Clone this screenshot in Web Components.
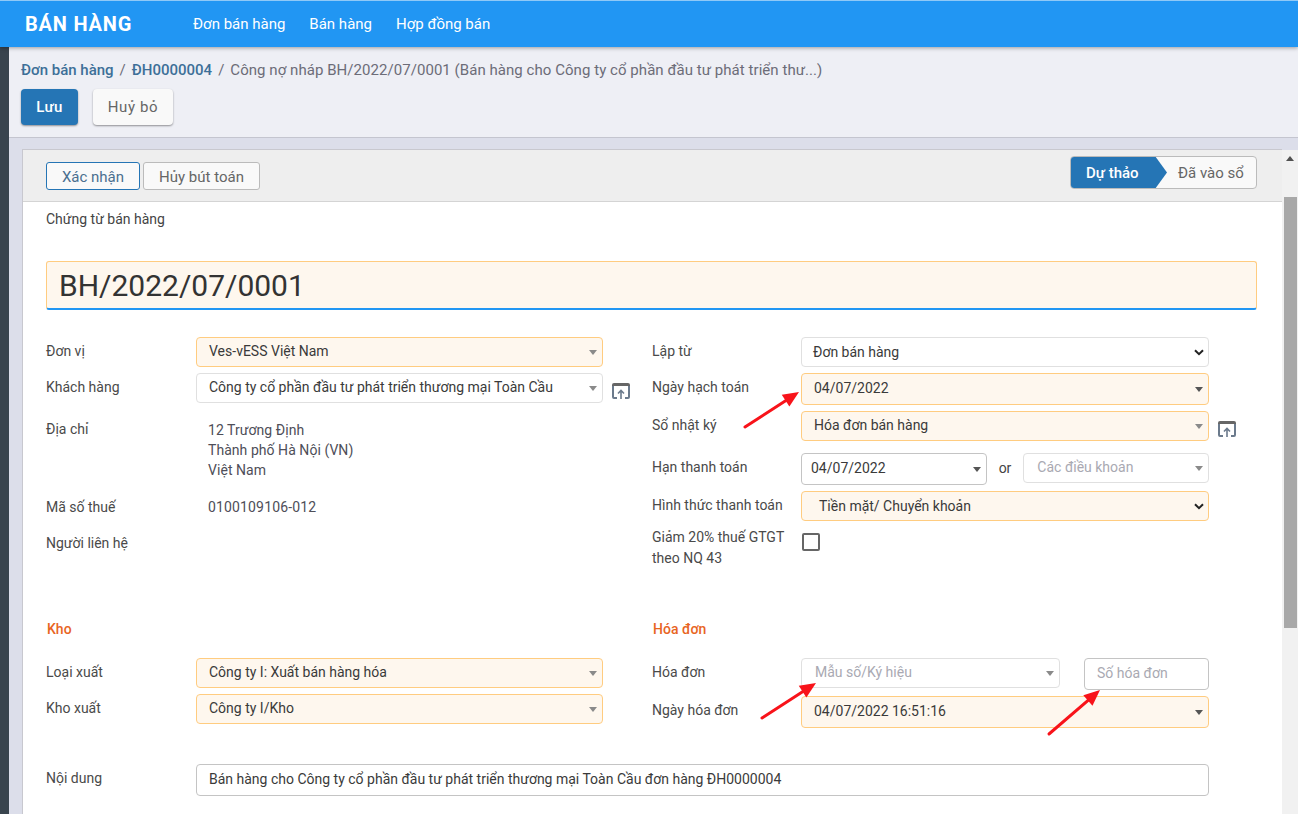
<!DOCTYPE html>
<html lang="vi">
<head>
<meta charset="utf-8">
<title>Bán hàng</title>
<style>
  html, body { margin: 0; height: 100%; overflow: hidden; }
  body { font-family: Roboto, "Liberation Sans", sans-serif; font-size: 14px; color: #444; }
</style>
</head>
<body>
<erp-shell>
  <erp-navbar slot="nav"></erp-navbar>
  <erp-control></erp-control>
  <erp-view>
    <erp-sheet>
      <form-group>
        <form-col>
          <form-row label="Đơn vị"><form-field tone="req" caret="tri"  >Ves-vESS Việt Nam</form-field></form-row>
          <form-row label="Khách hàng" top="6"><form-field caret="tri">Công ty cổ phần đầu tư phát triển thương mại Toàn Cầu</form-field><open-icon slot="extra"></open-icon></form-row>
          <form-row label="Địa chỉ" top="16" nudge="0"><plain-value style="margin-top:1px">12 Trương Định<br>Thành phố Hà Nội (VN)<br>Việt Nam</plain-value></form-row>
          <form-row label="Mã số thuế" top="17" nudge="0"><plain-value style="letter-spacing:.15px">0100109106-012</plain-value></form-row>
          <form-row label="Người liên hệ" top="16" nudge="0"></form-row>
        </form-col>
        <form-col>
          <form-row label="Lập từ" lw="149"><form-field caret="chev" pad="11">Đơn bán hàng</form-field></form-row>
          <form-row label="Ngày hạch toán" lw="149" top="6"><form-field tone="req" caret="dark" h="32">04/07/2022</form-field></form-row>
          <form-row label="Sổ nhật ký" lw="149" top="6"><form-field tone="req" caret="tri">Hóa đơn bán hàng</form-field><open-icon slot="extra"></open-icon></form-row>
          <form-row label="Hạn thanh toán" lw="149" top="12">
            <split-fields>
              <form-field tone="dim" caret="dark" h="32" pad="9" style="width:186px">04/07/2022</form-field>
              <span>or</span>
              <form-field caret="tri" muted pad="13" style="width:186px">Các điều khoản</form-field>
            </split-fields>
          </form-row>
          <form-row label="Hình thức thanh toán" lw="149" top="6"><form-field tone="req" caret="chev" pad="17">Tiền mặt/ Chuyển khoản</form-field></form-row>
          <form-row label="Giảm 20% thuế GTGT theo NQ 43" lw="149" top="6" nudge="0" wide="21"><check-box></check-box></form-row>
        </form-col>
      </form-group>
      <form-group style="margin-top:50px">
        <form-col>
          <group-title>Kho</group-title>
          <form-row label="Loại xuất"><form-field tone="req" caret="tri">Công ty I: Xuất bán hàng hóa</form-field></form-row>
          <form-row label="Kho xuất" top="6"><form-field tone="req" caret="tri">Công ty I/Kho</form-field></form-row>
        </form-col>
        <form-col>
          <group-title>Hóa đơn</group-title>
          <form-row label="Hóa đơn" lw="149">
            <split-fields style="gap:24px">
              <form-field caret="tri" muted pad="13" style="width:259px">Mẫu số/Ký hiệu</form-field>
              <form-field tone="dim" muted h="32" pad="12" style="width:125px">Số hóa đơn</form-field>
            </split-fields>
          </form-row>
          <form-row label="Ngày hóa đơn" lw="149" top="6"><form-field tone="req" caret="dark" h="32">04/07/2022 16:51:16</form-field></form-row>
        </form-col>
      </form-group>
      <form-row label="Nội dung" lw="150" fw="1013" top="36"><form-field tone="dim" h="32" pad="12">Bán hàng cho Công ty cổ phần đầu tư phát triển thương mại Toàn Cầu đơn hàng ĐH0000004</form-field></form-row>
    </erp-sheet>
  </erp-view>
  <red-arrows slot="overlay"></red-arrows>
</erp-shell>

<script>
// page frame: navbar on top, dark strip on the left, the rest in a column
class ErpShell extends HTMLElement {
  constructor() {
    super();
    this.attachShadow({ mode: 'open' }).innerHTML = `
      <style>
        :host { display: grid; grid-template-rows: 47px 1fr; height: 814px; position: relative; overflow: hidden; }
        .body { display: flex; min-height: 0; }
        .strip { width: 9px; flex: none; background: #39444e; }
        .main { flex: 1; min-width: 0; display: flex; flex-direction: column; background: #dcdeea; }
      </style>
      <slot name="nav"></slot>
      <div class="body">
        <div class="strip"></div>
        <div class="main"><slot></slot></div>
      </div>
      <slot name="overlay"></slot>`;
  }
}

class ErpNavbar extends HTMLElement {
  constructor() {
    super();
    this.attachShadow({ mode: 'open' }).innerHTML = `
      <style>
        :host { display: flex; align-items: center; height: 47px; box-sizing: border-box; border-top: 1px solid #8fc9f7;
                background: #2196f3; color: #fff; position: relative; z-index: 2; box-shadow: 0 1px 4px rgba(0,0,0,.35); }
        .brand { font-size: 20px; font-weight: 700; letter-spacing: .8px; margin-left: 25px; width: 168px; }
        a { font-size: 15px; margin-right: 24px; }
      </style>
      <div class="brand">BÁN HÀNG</div>
      <a>Đơn bán hàng</a><a>Bán hàng</a><a>Hợp đồng bán</a>`;
  }
}

class ErpControl extends HTMLElement {
  constructor() {
    super();
    this.attachShadow({ mode: 'open' }).innerHTML = `
      <style>
        :host { display: block; height: 91px; box-sizing: border-box; flex: none; background: #eeeff5;
                border-bottom: 1px solid #c4c5cf; padding: 13px 0 0 12px; }
        .crumbs { line-height: 20px; color: #6c6c78; font-size: 15px; white-space: nowrap; }
        .crumbs b { font-weight: 500; color: #3d6f98; }
        .crumbs i { font-style: normal; margin: 0 6px; }
        .crumbs span { letter-spacing: .05px; }
        .btns { display: flex; gap: 15px; margin-top: 9px; }
        button { height: 36px; border: 0; border-radius: 4px; font: inherit; font-size: 15px; padding: 0; }
        .save { width: 57px; background: #2575b5; color: #fff; font-weight: 500; letter-spacing: .3px; box-shadow: 0 1px 2px rgba(0,0,0,.4); }
        .cancel { width: 80px; background: #f9f9f9; color: #666; letter-spacing: .6px; box-shadow: 0 1px 2px rgba(0,0,0,.4); }
      </style>
      <div class="crumbs"><b>Đơn bán hàng</b><i>/</i><b>ĐH0000004</b><i>/</i><span>Công nợ nháp BH/2022/07/0001 (Bán hàng cho Công ty cổ phần đầu tư phát triển thư...)</span></div>
      <div class="btns"><button class="save">Lưu</button><button class="cancel">Huỷ bỏ</button></div>`;
  }
}

// scroll area, the scrollbar is drawn so it has the reference's look
class ErpView extends HTMLElement {
  constructor() {
    super();
    this.attachShadow({ mode: 'open' }).innerHTML = `
      <style>
        :host { display: flex; flex: 1; min-height: 0; padding: 11px 0 0 13px; overflow: hidden; }
        .content { flex: 1; min-width: 0; }
        .bar { width: 16px; flex: none; margin-top: 1px; background: #f1f1f1; position: relative; display: flex; flex-direction: column; align-items: center; }
        .up { width: 0; height: 0; margin-top: 6px; border: 4px solid transparent; border-top: 0; border-bottom: 5px solid #505050; }
        .thumb { width: 13px; height: 431px; margin-top: 36px; background: #a8a8a8; }
      </style>
      <div class="content"><slot></slot></div>
      <div class="bar"><div class="up"></div><div class="thumb"></div></div>`;
  }
}

class ErpSheet extends HTMLElement {
  constructor() {
    super();
    this.attachShadow({ mode: 'open' }).innerHTML = `
      <style>
        :host { display: block; background: #fff; border: 1px solid #c8c8cf; border-width: 1px 0 0 1px; height: 800px; }
        .bar { height: 52px; box-sizing: border-box; background: #eee; border-bottom: 1px solid #d4d4d4;
               display: flex; justify-content: space-between; padding: 6px 25px 0 23px; }
        .actions { display: flex; gap: 3px; padding-top: 6px; }
        button { height: 28px; box-sizing: border-box; border: 1px solid #bbb; border-radius: 3px; background: #f9f9f9;
                 font: inherit; font-size: 15px; color: #666; padding: 1px 0 0; }
        .primary { width: 94px; border-color: #2575b5; color: #4a6f8f; }
        .second { width: 117px; }
        .status { width: 187px; height: 33px; box-sizing: border-box; border: 1px solid #bbb; border-radius: 4px; background: #f9f9f9;
                  display: flex; position: relative; overflow: hidden; color: #666; font-size: 15px; }
        .on { position: absolute; left: -1px; top: -1px; bottom: -1px; width: 97px; background: #2575b5; color: #fff; font-weight: 500;
              clip-path: polygon(0 0, 85px 0, 97px 50%, 85px 100%, 0 100%); line-height: 35px; padding-left: 16px; box-sizing: border-box; }
        .off { position: absolute; left: 107px; line-height: 33px; white-space: nowrap; }
        .body { padding: 7px 0 0 23px; }
        .kind { line-height: 20px; color: #444; }
        .title { width: 1211px; height: 49px; box-sizing: border-box; margin-top: 32px; padding-left: 12px; background: #fef7ee; color: #333;
                 border: 1px solid #ffcc80; border-bottom: 2px solid #2196f3; border-radius: 3px; font-size: 30px; line-height: 47px; }
        .groups { margin-top: 27px; }
      </style>
      <div class="bar">
        <div class="actions"><button class="primary">Xác nhận</button><button class="second">Hủy bút toán</button></div>
        <div class="status"><div class="on">Dự thảo</div><div class="off">Đã vào sổ</div></div>
      </div>
      <div class="body">
        <div class="kind">Chứng từ bán hàng</div>
        <div class="title">BH/2022/07/0001</div>
        <div class="groups"><slot></slot></div>
      </div>`;
  }
}

class FormGroup extends HTMLElement {
  constructor() {
    super();
    this.attachShadow({ mode: 'open' }).innerHTML = `
      <style>:host { display: grid; grid-template-columns: 606px 557px; }</style><slot></slot>`;
  }
}

class FormCol extends HTMLElement {
  constructor() {
    super();
    this.attachShadow({ mode: 'open' }).innerHTML = `
      <style>:host { display: block; }</style><slot></slot>`;
  }
}

class GroupTitle extends HTMLElement {
  constructor() {
    super();
    this.attachShadow({ mode: 'open' }).innerHTML = `
      <style>:host { display: block; line-height: 20px; margin-bottom: 19px; color: #e8651f; font-weight: 500; padding-left: 1px; }</style><slot></slot>`;
  }
}

class FormRow extends HTMLElement {
  connectedCallback() {
    if (this.shadowRoot) return;
    const top = this.getAttribute('top') || 0;
    const lw = this.getAttribute('lw') || 150;
    const fw = this.getAttribute('fw') || (557 - lw);
    const nudge = this.getAttribute('nudge') || 4;
    const lh = this.getAttribute('wide') || 20;
    this.attachShadow({ mode: 'open' }).innerHTML = `
      <style>
        :host { display: grid; grid-template-columns: ${lw}px ${fw}px auto; margin-top: ${top}px; }
        .label { line-height: ${lh}px; padding-top: ${nudge}px; padding-right: 12px; color: #4a4a4a; }
        .extra { margin-left: 9px; }
      </style>
      <div class="label">${this.getAttribute('label')}</div>
      <div><slot></slot></div>
      <div class="extra"><slot name="extra"></slot></div>`;
  }
}

// looks like an odoo many2one / selection input
class FormField extends HTMLElement {
  connectedCallback() {
    if (this.shadowRoot) return;
    const h = this.getAttribute('h') || 30;
    const pad = this.getAttribute('pad') || 12;
    const tone = this.getAttribute('tone');
    const caret = this.getAttribute('caret');
    const bg = tone === 'req' ? '#fef7ee' : '#fff';
    const border = tone === 'req' ? '#ffcc80' : tone === 'dim' ? '#c4c4c4' : '#e0e0e0';
    const color = this.hasAttribute('muted') ? '#a9a9b2' : '#3a3a3a';
    // native selects sit one pixel lower than the text inputs
    const lift = caret === 'chev' ? 0 : 2;
    let mark = '';
    if (caret === 'chev') {
      mark = '<svg width="10" height="7" viewBox="0 0 10 7"><path d="M1 1.2 5 5.2 9 1.2" fill="none" stroke="#222" stroke-width="2"/></svg>';
    } else if (caret === 'tri') {
      mark = '<svg width="10" height="5" viewBox="0 0 10 5"><path d="M1 0H9L5 5Z" fill="#8a8a8a"/></svg>';
    } else if (caret === 'dark') {
      mark = '<svg width="10" height="5" viewBox="0 0 10 5"><path d="M1 0H9L5 5Z" fill="#555"/></svg>';
    }
    this.attachShadow({ mode: 'open' }).innerHTML = `
      <style>
        :host { display: flex; align-items: center; height: ${h}px; box-sizing: border-box; background: ${bg}; color: ${color};
                border: 1px solid ${border}; border-radius: 4px; padding: 0 4px 0 ${pad}px; white-space: nowrap; }
        .text { flex: 1; padding-bottom: ${lift}px; }
        svg { display: block; }
      </style>
      <div class="text"><slot></slot></div>${mark}`;
  }
}

class SplitFields extends HTMLElement {
  constructor() {
    super();
    this.attachShadow({ mode: 'open' }).innerHTML = `
      <style>:host { display: flex; gap: 12px; align-items: flex-start; line-height: 30px; }</style><slot></slot>`;
  }
}

class PlainValue extends HTMLElement {
  constructor() {
    super();
    this.attachShadow({ mode: 'open' }).innerHTML = `
      <style>:host { display: block; line-height: 20px; padding-left: 12px; color: #4e4e58; letter-spacing: .05px; }</style><slot></slot>`;
  }
}

class CheckBox extends HTMLElement {
  constructor() {
    super();
    this.attachShadow({ mode: 'open' }).innerHTML = `
      <style>:host { display: block; width: 18px; height: 18px; box-sizing: border-box; margin: 6px 0 0 1px; border: 2px solid #666; border-radius: 2px; background: #fff; }</style>`;
  }
}

class OpenIcon extends HTMLElement {
  constructor() {
    super();
    this.attachShadow({ mode: 'open' }).innerHTML = `
      <style>:host { display: block; width: 18px; height: 16px; margin-top: 10px; } svg { display: block; }</style>
      <svg width="18" height="16" viewBox="0 0 18 16">
        <path d="M0 2a2 2 0 0 1 2-2H16a2 2 0 0 1 2 2V3H0Z" fill="#666"/>
        <path d="M1 3V14a1 1 0 0 0 1 1H5M17 3V14a1 1 0 0 1-1 1H13" fill="none" stroke="#6b7a8c" stroke-width="2"/>
        <path d="M9 16V8M6 10.5 9 7.5 12 10.5" fill="none" stroke="#6b7a8c" stroke-width="1.6"/>
      </svg>`;
  }
}

// the red arrows somebody painted over the screenshot
class RedArrows extends HTMLElement {
  constructor() {
    super();
    const arrow = (x1, y1, x2, y2) => {
      const a = Math.atan2(y2 - y1, x2 - x1);
      const p = (d, s) => `${x2 - d * Math.cos(a) - s * Math.sin(a)},${y2 - d * Math.sin(a) + s * Math.cos(a)}`;
      return `<line x1="${x1}" y1="${y1}" x2="${x2 - 10 * Math.cos(a)}" y2="${y2 - 10 * Math.sin(a)}" stroke="#f8131a" stroke-width="3" stroke-linecap="round"/>
              <polygon points="${x2},${y2} ${p(16, 7)} ${p(16, -7)}" fill="#f8131a"/>`;
    };
    this.attachShadow({ mode: 'open' }).innerHTML = `
      <style>:host { position: absolute; inset: 0; pointer-events: none; z-index: 3; } svg { display: block; }</style>
      <svg width="1298" height="814">
        ${arrow(745, 427, 799, 392)}
        ${arrow(762, 718, 816, 683)}
        ${arrow(1049, 734, 1100, 690)}
      </svg>`;
  }
}

customElements.define('erp-shell', ErpShell);
customElements.define('erp-navbar', ErpNavbar);
customElements.define('erp-control', ErpControl);
customElements.define('erp-view', ErpView);
customElements.define('erp-sheet', ErpSheet);
customElements.define('form-group', FormGroup);
customElements.define('form-col', FormCol);
customElements.define('group-title', GroupTitle);
customElements.define('form-row', FormRow);
customElements.define('form-field', FormField);
customElements.define('split-fields', SplitFields);
customElements.define('plain-value', PlainValue);
customElements.define('check-box', CheckBox);
customElements.define('open-icon', OpenIcon);
customElements.define('red-arrows', RedArrows);
</script>
</body>
</html>
